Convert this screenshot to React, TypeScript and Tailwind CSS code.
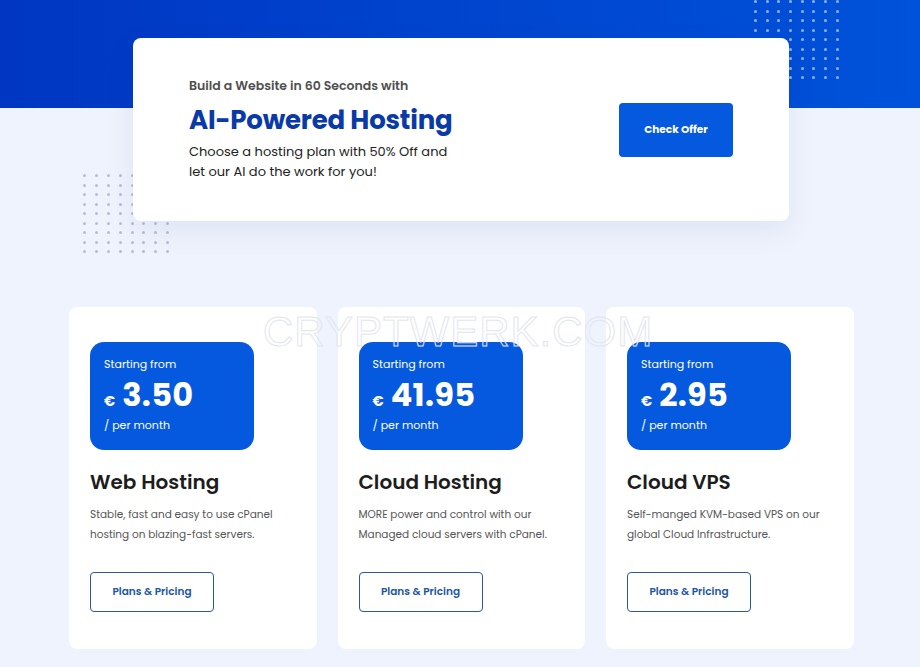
import React from "react";

const font = { fontFamily: "Poppins, Inter, 'Noto Sans', sans-serif" };

function Dots({ cols, rows, color, gx, gy }: { cols: number; rows: number; color: string; gx: number; gy: number }) {
  const items = Array.from({ length: cols * rows });
  return (
    <div className="grid" style={{ gridTemplateColumns: `repeat(${cols}, 3px)`, columnGap: gx, rowGap: gy }}>
      {items.map((_, i) => (
        <div key={i} className="w-[3px] h-[3px] rounded-full" style={{ background: color }} />
      ))}
    </div>
  );
}

const plans = [
  { price: "3.50", title: "Web Hosting", desc: ["Stable, fast and easy to use cPanel", "hosting on blazing-fast servers."] },
  { price: "41.95", title: "Cloud Hosting", desc: ["MORE power and control with our", "Managed cloud servers with cPanel."] },
  { price: "2.95", title: "Cloud VPS", desc: ["Self-manged KVM-based VPS on our", "global Cloud Infrastructure."] },
];

export default function App() {
  return (
    <div className="relative w-[920px] h-[667px] overflow-hidden bg-[#eff3fd]" style={font}>
      <div className="h-[108px] bg-gradient-to-r from-[#0036c2] to-[#0052da]" />
      <div className="absolute left-[754px] top-[0px]">
        <Dots cols={8} rows={9} color="#8fb3f2" gx={8.7} gy={6.5} />
      </div>
      <div className="absolute left-[83px] top-[174px]">
        <Dots cols={8} rows={9} color="#b3bed6" gx={8.9} gy={6.5} />
      </div>

      <div className="absolute left-[133px] top-[38px] w-[656px] h-[183px] bg-white rounded-[8px] shadow-[0_10px_30px_rgba(30,60,140,0.08)] flex items-center pl-[56px] pr-[56px]">
        <div className="flex-1">
          <div className="text-[12.5px] font-semibold text-[#4f4f4f] leading-[16px]">Build a Website in 60 Seconds with</div>
          <div className="text-[26px] font-bold text-[#0a39a8] leading-[32px] mt-[10px] tracking-[-0.2px]">AI-Powered Hosting</div>
          <div className="text-[13px] text-[#222] leading-[20px] mt-[6px]">
            Choose a hosting plan with 50% Off and
            <br />
            let our AI do the work for you!
          </div>
        </div>
        <button className="w-[114px] h-[54px] bg-[#0559df] rounded-[4px] text-white text-[10.5px] font-bold">Check Offer</button>
      </div>

      <div className="absolute left-[69px] top-[307px] flex gap-[21px]">
        {plans.map((p) => (
          <div key={p.title} className="w-[247.5px] h-[342px] bg-white rounded-[8px] pt-[35px] px-[21px]">
            <div className="w-[164px] h-[108px] bg-[#0559de] rounded-[14px] pl-[14px] pt-[14px] text-white">
              <div className="text-[11px] leading-[16px]">Starting from</div>
              <div className="flex items-baseline mt-[6px] leading-[34px]">
                <span className="text-[14px] font-bold mr-[7px]">€</span>
                <span className="text-[32px] font-bold tracking-[0.3px]">{p.price}</span>
              </div>
              <div className="text-[11px] leading-[16px] mt-[-1px]">/ per month</div>
            </div>
            <div className="text-[20px] font-semibold text-[#1d1d1d] mt-[20px] leading-[24px]">{p.title}</div>
            <div className="text-[10.5px] text-[#555] leading-[20px] mt-[11px]">
              {p.desc[0]}
              <br />
              {p.desc[1]}
            </div>
            <button className="mt-[27px] w-[124px] h-[40px] border border-[#2a5a9a] rounded-[4px] text-[10.5px] font-semibold text-[#1d56a6]">
              Plans &amp; Pricing
            </button>
          </div>
        ))}
      </div>

      <div className="absolute left-[263px] top-[312px] text-[42px] leading-[40px] text-transparent [-webkit-text-stroke:1px_#e3e6ee] tracking-[1px] pointer-events-none" style={{ fontFamily: "'Liberation Sans', Arial, sans-serif" }}>
        CRYPTWERK.COM
      </div>
    </div>
  );
}
